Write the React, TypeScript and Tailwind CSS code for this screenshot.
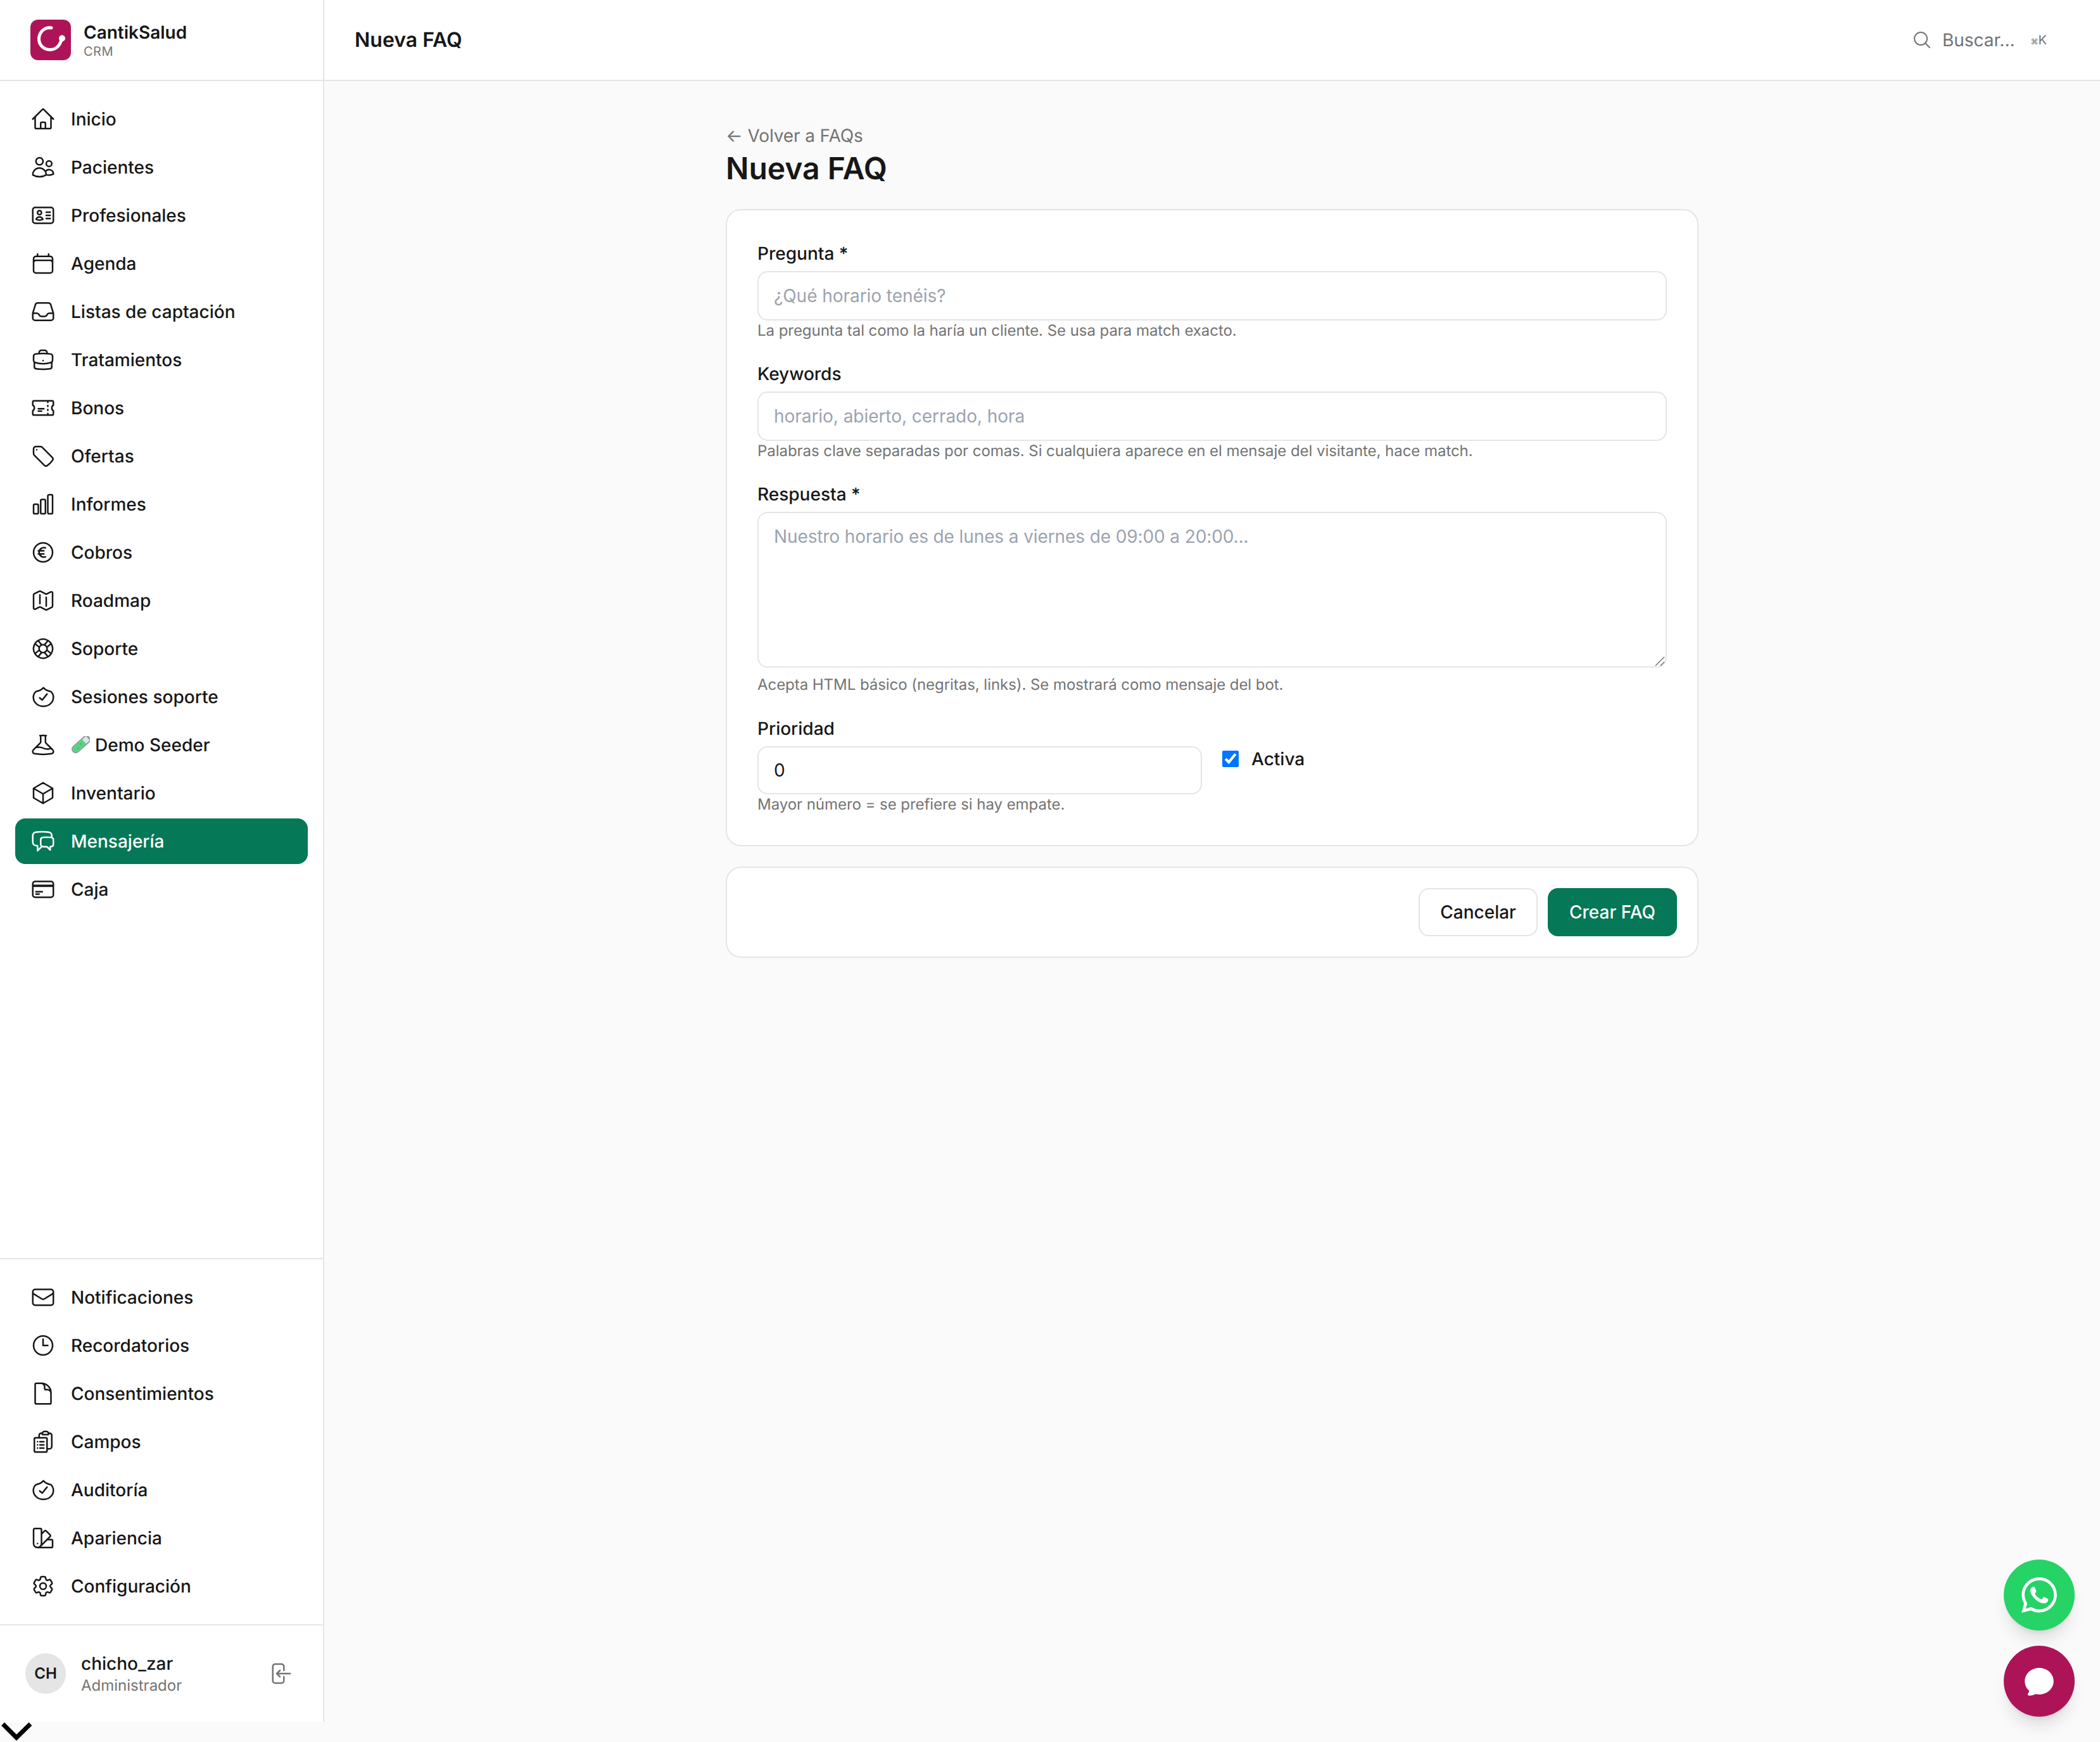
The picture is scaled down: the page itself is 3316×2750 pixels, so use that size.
import type { ComponentType } from 'react';
import {
    HiOutlineHome,
    HiOutlineUsers,
    HiOutlineIdentification,
    HiOutlineCalendar,
    HiOutlineInbox,
    HiOutlineBriefcase,
    HiOutlineTicket,
    HiOutlineTag,
    HiOutlineChartBar,
    HiOutlineCurrencyEuro,
    HiOutlineMap,
    HiOutlineLifebuoy,
    HiOutlineBeaker,
    HiOutlineCube,
    HiOutlineChatBubbleLeftRight,
    HiOutlineCreditCard,
    HiOutlineEnvelope,
    HiOutlineClock,
    HiOutlineDocument,
    HiOutlineClipboardDocumentList,
    HiOutlineSwatch,
    HiOutlineCog6Tooth,
    HiOutlineArrowLeftEndOnRectangle,
    HiOutlineMagnifyingGlass,
    HiChatBubbleOvalLeft,
} from 'react-icons/hi2';
import { SiWhatsapp } from 'react-icons/si';

type NavItem = { label: string; icon: ComponentType<{ className?: string }>; active?: boolean; tube?: boolean };

// rounded shield with a shallow peak, the package's shield-check is too pointed
function ShieldIcon({ className }: { className?: string }) {
    return (
        <svg viewBox="0 0 24 24" className={className} fill="none" stroke="currentColor" strokeWidth="1.5" strokeLinecap="round" strokeLinejoin="round">
            <path d="M12.3 3.4C10.5 5.4 8 6.6 5.3 7C3.8 8.4 2.8 10.3 2.8 12.4C2.8 17.2 7 21 12.3 21C17.6 21 21.8 17.2 21.8 12.4C21.8 10.3 20.8 8.4 19.3 7C16.6 6.6 14.1 5.4 12.3 3.4Z" />
            <path d="M8.8 13l2.4 2 4.6-5.6" />
        </svg>
    );
}

const mainNav: NavItem[] = [
    { label: 'Inicio', icon: HiOutlineHome },
    { label: 'Pacientes', icon: HiOutlineUsers },
    { label: 'Profesionales', icon: HiOutlineIdentification },
    { label: 'Agenda', icon: HiOutlineCalendar },
    { label: 'Listas de captación', icon: HiOutlineInbox },
    { label: 'Tratamientos', icon: HiOutlineBriefcase },
    { label: 'Bonos', icon: HiOutlineTicket },
    { label: 'Ofertas', icon: HiOutlineTag },
    { label: 'Informes', icon: HiOutlineChartBar },
    { label: 'Cobros', icon: HiOutlineCurrencyEuro },
    { label: 'Roadmap', icon: HiOutlineMap },
    { label: 'Soporte', icon: HiOutlineLifebuoy },
    { label: 'Sesiones soporte', icon: ShieldIcon },
    { label: 'Demo Seeder', icon: HiOutlineBeaker, tube: true },
    { label: 'Inventario', icon: HiOutlineCube },
    { label: 'Mensajería', icon: HiOutlineChatBubbleLeftRight, active: true },
    { label: 'Caja', icon: HiOutlineCreditCard },
];

const bottomNav: NavItem[] = [
    { label: 'Notificaciones', icon: HiOutlineEnvelope },
    { label: 'Recordatorios', icon: HiOutlineClock },
    { label: 'Consentimientos', icon: HiOutlineDocument },
    { label: 'Campos', icon: HiOutlineClipboardDocumentList },
    { label: 'Auditoría', icon: ShieldIcon },
    { label: 'Apariencia', icon: HiOutlineSwatch },
    { label: 'Configuración', icon: HiOutlineCog6Tooth },
];

function TestTube() {
    return (
        <svg viewBox="0 0 30 28" className="mr-2 h-7 w-[30px] shrink-0">
            <g transform="rotate(48 15 14)">
                <path d="M9.5 -3h11v27a5.5 5.5 0 0 1-11 0z" fill="#dce5e8" stroke="#8d9ba3" strokeWidth="2" />
                <path d="M10.5 6h9v18a4.5 4.5 0 0 1-9 0z" fill="#4fd67f" />
                <circle cx="14" cy="13" r="1" fill="#2fae5c" />
                <circle cx="16.5" cy="20" r="1" fill="#2fae5c" />
                <rect x="8" y="-5" width="14" height="3" rx="1" fill="#8d9ba3" />
            </g>
        </svg>
    );
}

function NavRow({ item }: { item: NavItem }) {
    const Icon = item.icon;
    return (
        <a
            className={`flex h-[72px] items-center gap-6 rounded-2xl px-6 text-[28px] font-medium ${
                item.active ? 'bg-[#047857] text-white' : 'text-[#171717]'
            }`}
        >
            <Icon className="h-10 w-10 shrink-0" />
            <span className="flex items-center">
                {item.tube && <TestTube />}
                {item.label}
            </span>
        </a>
    );
}

function Field({ label, hint, placeholder }: { label: string; hint: string; placeholder: string }) {
    return (
        <div>
            <label className="mb-2 block text-[28px] leading-10 font-medium text-[#171717]">{label}</label>
            <input
                placeholder={placeholder}
                className="block h-[78px] w-full rounded-2xl border-2 border-[#e5e5e5] bg-white px-6 text-[28px] tracking-[-0.05px] text-[#171717] placeholder:text-[#9ca3af]"
            />
            <p className="text-[24px] leading-8 tracking-[-0.05px] text-[#737373]">{hint}</p>
        </div>
    );
}

export default function App() {
    return (
        <div className="h-[2750px] overflow-hidden bg-[#fafafa] font-[Inter,sans-serif] text-[#171717] [text-rendering:geometricPrecision]">
            <div className="flex h-[2718px]">
                <aside className="flex w-[512px] shrink-0 flex-col border-r-2 border-[#e5e5e5] bg-white">
                    <div className="flex h-[128px] shrink-0 items-center gap-5 border-b-2 border-[#e5e5e5] px-12">
                        <div className="flex h-16 w-16 items-center justify-center rounded-xl bg-[#ad1457]">
                            <svg viewBox="0 0 64 64" className="h-16 w-16" fill="none">
                                <path
                                    d="M33 13C22 11.5 13.5 20 13.5 30.5C13.5 40 21 47.5 31 47.5C40 47.5 47 41 49 31"
                                    stroke="white"
                                    strokeWidth="5"
                                    strokeLinecap="round"
                                />
                                <circle cx="50" cy="29.5" r="5" fill="white" />
                            </svg>
                        </div>
                        <div>
                            <div className="text-[28px] leading-9 font-semibold">CantikSalud</div>
                            <div className="text-[20px] leading-6 tracking-[0.5px] text-[#737373]">CRM</div>
                        </div>
                    </div>

                    <nav className="flex flex-1 flex-col gap-1 px-6 py-6">
                        {mainNav.map((item) => (
                            <NavRow key={item.label} item={item} />
                        ))}
                    </nav>

                    <nav className="flex flex-col gap-1 border-t-2 border-[#e5e5e5] px-6 py-6">
                        {bottomNav.map((item) => (
                            <NavRow key={item.label} item={item} />
                        ))}
                    </nav>

                    <div className="flex h-[154px] shrink-0 items-center gap-6 border-t-2 border-[#e5e5e5] px-10">
                        <div className="flex h-16 w-16 items-center justify-center rounded-full bg-[#e5e5e5] text-[24px] font-semibold">
                            CH
                        </div>
                        <div className="flex-1">
                            <div className="text-[28px] leading-9 font-medium">chicho_zar</div>
                            <div className="mt-px text-[24px] leading-8 text-[#737373]">Administrador</div>
                        </div>
                        <HiOutlineArrowLeftEndOnRectangle className="mr-2 h-10 w-10 text-[#737373]" />
                    </div>
                </aside>

                <main className="flex min-w-0 flex-1 flex-col">
                    <header className="flex h-[128px] shrink-0 items-center justify-between border-b-2 border-[#e5e5e5] bg-white px-12">
                        <h1 className="text-[32px] font-semibold">Nueva FAQ</h1>
                        <div className="mr-9 flex items-center text-[#737373]">
                            <HiOutlineMagnifyingGlass className="h-8 w-8" />
                            <span className="ml-4 text-[28px]">Buscar...</span>
                            <span className="ml-[25px] flex items-baseline text-[20px]">
                                <span className="text-[12px]">⌘</span>K
                            </span>
                        </div>
                    </header>

                    <div className="mx-auto w-[1536px] pt-[66px]">
                        <a className="block text-[28px] leading-10 tracking-[-0.1px] text-[#737373]">← Volver a FAQs</a>
                        <h2 className="text-[48px] leading-16 font-semibold">Nueva FAQ</h2>

                        <form className="mt-8 flex flex-col gap-8">
                            <div className="flex flex-col gap-8 rounded-3xl border-2 border-[#e5e5e5] bg-white p-12">
                                <Field
                                    label="Pregunta *"
                                    placeholder="¿Qué horario tenéis?"
                                    hint="La pregunta tal como la haría un cliente. Se usa para match exacto."
                                />
                                <Field
                                    label="Keywords"
                                    placeholder="horario, abierto, cerrado, hora"
                                    hint="Palabras clave separadas por comas. Si cualquiera aparece en el mensaje del visitante, hace match."
                                />
                                <div>
                                    <label className="mb-2 block text-[28px] leading-10 font-medium">Respuesta *</label>
                                    <div className="relative">
                                        <textarea
                                            placeholder="Nuestro horario es de lunes a viernes de 09:00 a 20:00..."
                                            className="block h-[246px] w-full resize-none rounded-2xl border-2 border-[#e5e5e5] bg-white px-6 pt-[17px] pb-4 text-[28px] leading-10 tracking-[-0.11px] placeholder:text-[#9ca3af]"
                                        />
                                        <svg viewBox="0 0 16 16" className="absolute right-[3px] bottom-[2px] h-4 w-4" fill="none" stroke="#6b6b6b" strokeWidth="1.4">
                                            <path d="M1 15L15 1M9 15l6-6" />
                                        </svg>
                                    </div>
                                    <p className="mt-[11px] mb-px text-[24px] leading-8 tracking-[-0.05px] text-[#737373]">
                                        Acepta HTML básico (negritas, links). Se mostrará como mensaje del bot.
                                    </p>
                                </div>
                                <div className="grid grid-cols-2 gap-8">
                                    <div>
                                        <label className="mb-2 block text-[28px] leading-10 font-medium">Prioridad</label>
                                        <input
                                            type="number"
                                            defaultValue={0}
                                            className="block h-[76px] w-full rounded-2xl border-2 border-[#e5e5e5] bg-white px-6 text-[28px]"
                                        />
                                        <p className="text-[24px] leading-8 tracking-[-0.05px] text-[#737373]">Mayor número = se prefiere si hay empate.</p>
                                    </div>
                                    <label className="flex h-[88px] items-center gap-5 self-start pt-12 text-[28px] leading-10 font-medium">
                                        <input type="checkbox" defaultChecked className="h-[26px] w-[26px] accent-[#0075ff]" />
                                        Activa
                                    </label>
                                </div>
                            </div>

                            <div className="flex justify-end gap-4 rounded-3xl border-2 border-[#e5e5e5] bg-white p-8">
                                <button type="button" className="h-[76px] rounded-2xl border-2 border-[#e5e5e5] bg-white px-8 text-[28px] font-medium">
                                    Cancelar
                                </button>
                                <button type="submit" className="h-[76px] rounded-2xl border-2 border-[#047857] bg-[#047857] px-8 text-[28px] font-medium text-white">
                                    Crear FAQ
                                </button>
                            </div>
                        </form>
                    </div>
                </main>
            </div>

            <svg viewBox="0 0 52 32" className="h-8 w-[52px]" fill="none">
                <path d="M4.5 3.5L26 25L48 3.5" stroke="black" strokeWidth="7" />
            </svg>

            <div className="fixed right-10 bottom-10 flex flex-col gap-6">
                <button className="flex h-28 w-28 items-center justify-center rounded-full bg-[#25d366] text-white shadow-xl">
                    <SiWhatsapp size={56} />
                </button>
                <button className="flex h-28 w-28 items-center justify-center rounded-full bg-[#ad1457] text-white shadow-xl">
                    <HiChatBubbleOvalLeft size={56} />
                </button>
            </div>
        </div>
    );
}
